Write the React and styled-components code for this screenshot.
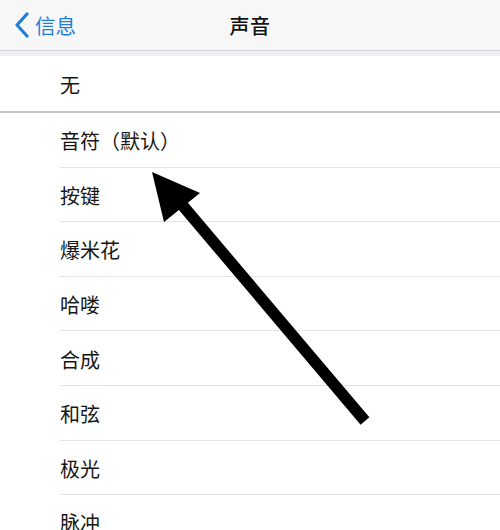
import React from 'react';
import styled, { createGlobalStyle } from 'styled-components';

const GlobalStyle = createGlobalStyle`
  html, body {
    margin: 0;
    padding: 0;
    background: #ffffff;
  }
  body {
    font-family: "Noto Sans CJK SC", "Noto Sans", sans-serif;
    -webkit-font-smoothing: antialiased;
  }
`

const Page = styled.div`
  position: relative;
  width: 500px;
  height: 530px;
  overflow: hidden;
  background: #ffffff;
`
const NavBar = styled.div`
  height: 51px;
  display: grid;
  grid-template-columns: 1fr auto 1fr;
  align-items: center;
  background: #f7f7f8;
  border-bottom: 1px solid #d3d3d8;
  box-sizing: border-box;
`
const BackButton = styled.div`
  display: flex;
  align-items: center;
  gap: 5px;
  padding-left: 14px;
  color: #1f7fd6;
  font-size: 20.5px;
  line-height: 1;
`
const Title = styled.div`
  font-size: 20px;
  font-weight: 500;
  color: #111111;
  letter-spacing: 0.5px;
`
const Band = styled.div`
  height: 5px;
  background: #efeff4;
`
const Row = styled.div`
  height: ${p => p.$h}px;
  box-sizing: border-box;
  display: flex;
  padding-left: ${p => (p.$full ? 0 : 60)}px;
  border-bottom: ${p => (p.$full ? '2px solid #c9c9cc' : 'none')};
`
const RowInner = styled.div`
  flex: 1;
  display: flex;
  align-items: center;
  padding-left: ${p => (p.$full ? 60 : 0)}px;
  padding-top: 2px;
  box-sizing: border-box;
  border-bottom: ${p => (p.$full ? 'none' : '1px solid #e4e4e6')};
  font-size: 20px;
  color: #161616;
`
const Overlay = styled.svg`
  position: absolute;
  left: 0;
  top: 0;
  pointer-events: none;
`

const sounds = ['音符（默认）', '按键', '爆米花', '哈喽', '合成', '和弦', '极光', '脉冲'];

function Chevron() {
  return (
    <svg width="16" height="26" viewBox="0 0 16 26">
      <path d="M13 2 L3 13 L13 24" fill="none" stroke="#1f7fd6" strokeWidth="3.2" strokeLinecap="round" strokeLinejoin="round" />
    </svg>
  )
}

export default function App() {
  return (
    <>
      <GlobalStyle />
      <Page>
        <NavBar>
          <BackButton>
            <Chevron />
            <span>信息</span>
          </BackButton>
          <Title>声音</Title>
          <div />
        </NavBar>
        <Band />
        <Row $full $h={57}>
          <RowInner $full>无</RowInner>
        </Row>
        {sounds.map(s => (
          <Row key={s} $h={54.6}>
            <RowInner>{s}</RowInner>
          </Row>
        ))}
        <Overlay width="500" height="530" viewBox="0 0 500 530">
          <line x1="365" y1="421" x2="178" y2="200" stroke="#000" strokeWidth="11.5" />
          <polygon points="152,172 200,193 164,222" fill="#000" />
        </Overlay>
      </Page>
    </>
  )
}
